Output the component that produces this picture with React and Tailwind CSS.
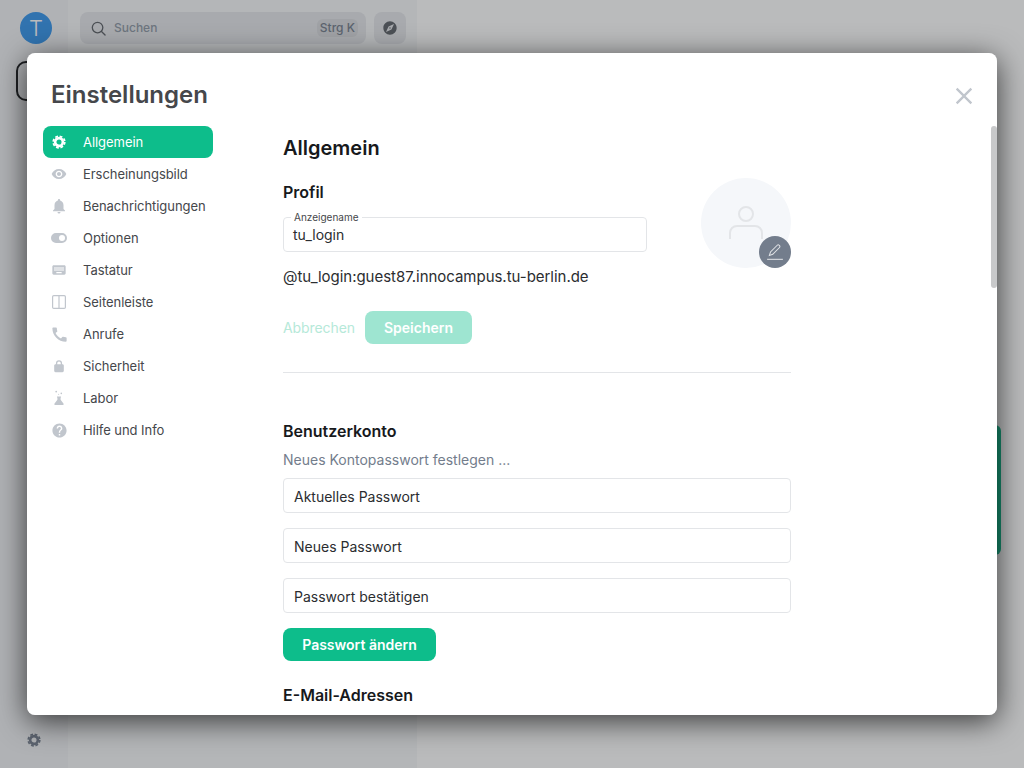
import React from "react";
import { MdVisibility, MdNotifications, MdKeyboard, MdCall, MdHelp, MdExplore, MdClose } from "react-icons/md";

const GearIcon = ({ className }) => (
  <svg viewBox="0 0 16 16" className={className} fill="none" stroke="currentColor">
    <circle cx="8" cy="8" r="4.4" strokeWidth="3" />
    <circle cx="8" cy="8" r="6.6" strokeWidth="2" strokeDasharray="3.2 1.98" />
  </svg>
);

const SearchIcon = ({ className }) => (
  <svg viewBox="0 0 16 16" className={className} fill="none" stroke="currentColor" strokeWidth="1.4" strokeLinecap="round">
    <circle cx="7" cy="7" r="5.6" />
    <path d="M11.2 11.2l3.800 3.800" />
  </svg>
);

const ToggleIcon = ({ className }) => (
  <svg viewBox="0 0 16 16" className={className} fill="currentColor">
    <path d="M5 3h6a5 5 0 0 1 0 10H5A5 5 0 0 1 5 3Zm6 2a3 3 0 1 0 0 6 3 3 0 0 0 0-6Z" fillRule="evenodd" />
  </svg>
);

const SidebarIcon = ({ className }) => (
  <svg viewBox="0 0 16 16" className={className} fill="none" stroke="currentColor" strokeWidth="1.2">
    <rect x="1.6" y="1.6" width="12.8" height="12.8" rx="1.2" />
    <path d="M8 1.6v12.8" />
  </svg>
);

const LockIcon = ({ className }) => (
  <svg viewBox="0 0 16 16" className={className} fill="currentColor">
    <path
      fillRule="evenodd"
      d="M4.500 6V4.800a3.500 3.500 0 0 1 7 0V6h.500c.8 0 1.500.7 1.500 1.500v6c0 .8-.7 1.500-1.500 1.500H4c-.8 0-1.500-.7-1.500-1.500v-6C2.500 6.700 3.200 6 4 6h.5Zm1.500 0h4V4.800a2 2 0 0 0-4 0V6Z"
    />
  </svg>
);

const FlaskIcon = ({ className }) => (
  <svg viewBox="0 0 16 16" className={className} fill="currentColor">
    <path d="M6 6.500h4v1H9.600v2.200l3 4.100c.4.600 0 1.200-.7 1.200H4.100c-.7 0-1.100-.6-.7-1.200l3-4.100V7.500H6v-1Z" />
    <circle cx="5.200" cy="1.600" r="0.900" />
    <circle cx="10.300" cy="3.400" r="0.800" />
    <circle cx="7.600" cy="4.200" r="0.500" />
  </svg>
);

const navItems = [
  { label: "Allgemein", icon: GearIcon, size: "h-[14px] w-[14px]", active: true },
  { label: "Erscheinungsbild", icon: MdVisibility, size: "h-4 w-4" },
  { label: "Benachrichtigungen", icon: MdNotifications, size: "h-[18px] w-[18px]" },
  { label: "Optionen", icon: ToggleIcon, size: "h-4 w-4" },
  { label: "Tastatur", icon: MdKeyboard, size: "h-4 w-4" },
  { label: "Seitenleiste", icon: SidebarIcon, size: "h-4 w-4" },
  { label: "Anrufe", icon: MdCall, size: "h-[19px] w-[19px]" },
  { label: "Sicherheit", icon: LockIcon, size: "h-[14px] w-[14px]" },
  { label: "Labor", icon: FlaskIcon, size: "h-4 w-4" },
  { label: "Hilfe und Info", icon: MdHelp, size: "h-[17px] w-[17px]" },
];

const PasswordField = ({ label }) => (
  <div className="flex h-[35px] items-center rounded border border-[#e3e5e8] px-[10px] pt-[2px] text-sm text-[#2b2d30]">
    {label}
  </div>
);

const Background = () => (
  <div className="flex h-screen w-full">
    <div className="flex w-[68px] flex-col items-center bg-[#f0f2f5] pt-3">
      <div className="ml-1 flex h-8 w-8 items-center justify-center rounded-full bg-[#3494ec] text-[22px] font-light text-white">
        T
      </div>
      <div className="mt-[17px] ml-1 h-10 w-10 rounded-[10px] border-2 border-[#17191c]" />
      <GearIcon className="mt-auto mb-[21px] h-[14px] w-[14px] text-[#737d8c]" />
    </div>
    <div className="w-[349px] bg-[#f7f8fa] pt-3 pl-3">
      <div className="flex gap-2">
        <div className="flex h-8 w-[286px] items-center rounded-lg bg-[#e4e6ea] px-[8px] text-xs font-medium text-[#8d97a5]">
          <SearchIcon className="mr-[8px] ml-[3px] h-[15px] w-[15px] text-[#5c6067]" />
          Suchen
          <span className="ml-auto rounded-md bg-[#d8dade] px-[3px] py-px text-xs text-[#737d8c]">Strg K</span>
        </div>
        <div className="flex h-8 w-8 items-center justify-center rounded-lg bg-[#e4e6ea]">
          <MdExplore className="h-4 w-4 text-[#5c6067]" />
        </div>
      </div>
    </div>
    <div className="relative flex-1 bg-white">
      <div className="absolute top-[425px] right-[23px] h-[130px] w-[40px] rounded-md bg-[#0dbd8b]" />
    </div>
  </div>
);

const SettingsDialog = () => (
  <div className="relative h-[662px] w-[970px] overflow-hidden rounded-lg bg-white">
    <div className="pt-[25px] pl-6">
      <h1 className="text-2xl leading-[34px] font-semibold text-[#45474b]">Einstellungen</h1>
    </div>
    <MdClose className="absolute top-[29px] right-[19px] h-7 w-7 text-[#c1c6cd]" />
    <div className="absolute top-[73px] right-0 h-[162px] w-[6px] rounded-[3px] bg-[#c8c9ca]" />
    <div className="mt-[14px] flex pl-4">
      <nav className="flex w-[170px] shrink-0 flex-col">
        {navItems.map(({ label, icon: Icon, size, active }) => (
          <div
            key={label}
            className={
              active
                ? "flex h-8 items-center rounded-lg bg-[#0dbd8b] pl-2 text-[13px] tracking-[-0.05px] text-white"
                : "flex h-8 items-center rounded-lg pl-2 text-[13px] tracking-[-0.05px] text-[#45474b]"
            }
          >
            <span className="flex h-4 w-4 items-center justify-center">
              <Icon className={active ? `${size} shrink-0 text-white` : `${size} shrink-0 text-[#c1c6cd]`} />
            </span>
            <span className="ml-4 pt-px">{label}</span>
          </div>
        ))}
      </nav>
      <main className="ml-[70px] w-[508px] pt-2">
        <h2 className="text-xl leading-7 font-semibold text-[#17191c]">Allgemein</h2>
        <div className="relative pt-[18px]">
          <div className="w-[364px]">
            <h3 className="text-base leading-6 font-semibold text-[#17191c]">Profil</h3>
            <div className="relative mt-[13px] flex h-[35px] items-center rounded border border-[#e3e5e8] pl-[9px] text-sm text-[#2b2d30]">
              <span className="absolute -top-[6px] left-[7px] bg-white px-[3px] text-[10px] leading-[11px] text-[#45474b]">
                Anzeigename
              </span>
              tu_login
            </div>
          </div>
          <div className="absolute top-[16px] right-0 flex h-[90px] w-[90px] items-center justify-center rounded-full bg-[#f5f7fa]">
            <svg viewBox="0 0 36 36" className="h-9 w-9 -translate-y-[1px]" fill="none" stroke="#e3e5e8" strokeWidth="2">
              <circle cx="18" cy="10" r="7" />
              <path d="M2 35v-6c0-4 3-7 7-7h18c4 0 7 3 7 7v6" />
            </svg>
            <div className="absolute right-0 bottom-0 flex h-8 w-8 items-center justify-center rounded-full bg-[#737d8c]">
              <svg viewBox="0 0 16 16" className="h-[18px] w-[18px]" fill="none" stroke="#e3e5e8" strokeWidth="0.9">
                <path d="M3 11l1-3 6-6c.5-.5 1.200-.5 1.700 0l.300.300c.5.500.5 1.200 0 1.700l-6 6-3 1Z" />
                <path d="M1 14.500h14" />
              </svg>
            </div>
          </div>
        </div>
        <p className="mt-[15px] text-[15px] leading-5 tracking-[-0.03px] text-[#2b2d30]">
          @tu_login:guest87.innocampus.tu-berlin.de
        </p>
        <div className="mt-6 flex items-center gap-[10px]">
          <span className="text-sm tracking-[-0.08px] text-[#b6e9d9]">Abbrechen</span>
          <button className="h-[33px] w-[107px] rounded-lg bg-[#9ee5d1] text-sm font-semibold text-white">Speichern</button>
        </div>
        <div className="mt-7 h-px bg-[#e3e5e8]" />
        <h3 className="mt-[46px] text-base leading-6 font-semibold text-[#17191c]">Benutzerkonto</h3>
        <p className="mt-[7px] text-sm leading-5 text-[#737d8c]">Neues Kontopasswort festlegen ...</p>
        <div className="mt-2 flex flex-col gap-[15px]">
          <PasswordField label="Aktuelles Passwort" />
          <PasswordField label="Neues Passwort" />
          <PasswordField label="Passwort bestätigen" />
        </div>
        <button className="mt-[15px] h-[33px] w-[153px] rounded-lg bg-[#0dbd8b] text-sm font-semibold text-white">
          Passwort ändern
        </button>
        <h3 className="mt-[22px] text-base leading-6 font-semibold text-[#17191c]">E-Mail-Adressen</h3>
      </main>
    </div>
  </div>
);

export default function App() {
  return (
    <div className="relative h-screen w-full overflow-hidden font-['Inter',sans-serif]">
      <Background />
      <div className="absolute inset-0 flex items-center justify-center bg-[#2e3033]/33">
        <div className="rounded-lg shadow-[0_6px_30px_rgba(0,0,0,0.7)]">
          <SettingsDialog />
        </div>
      </div>
    </div>
  );
}
